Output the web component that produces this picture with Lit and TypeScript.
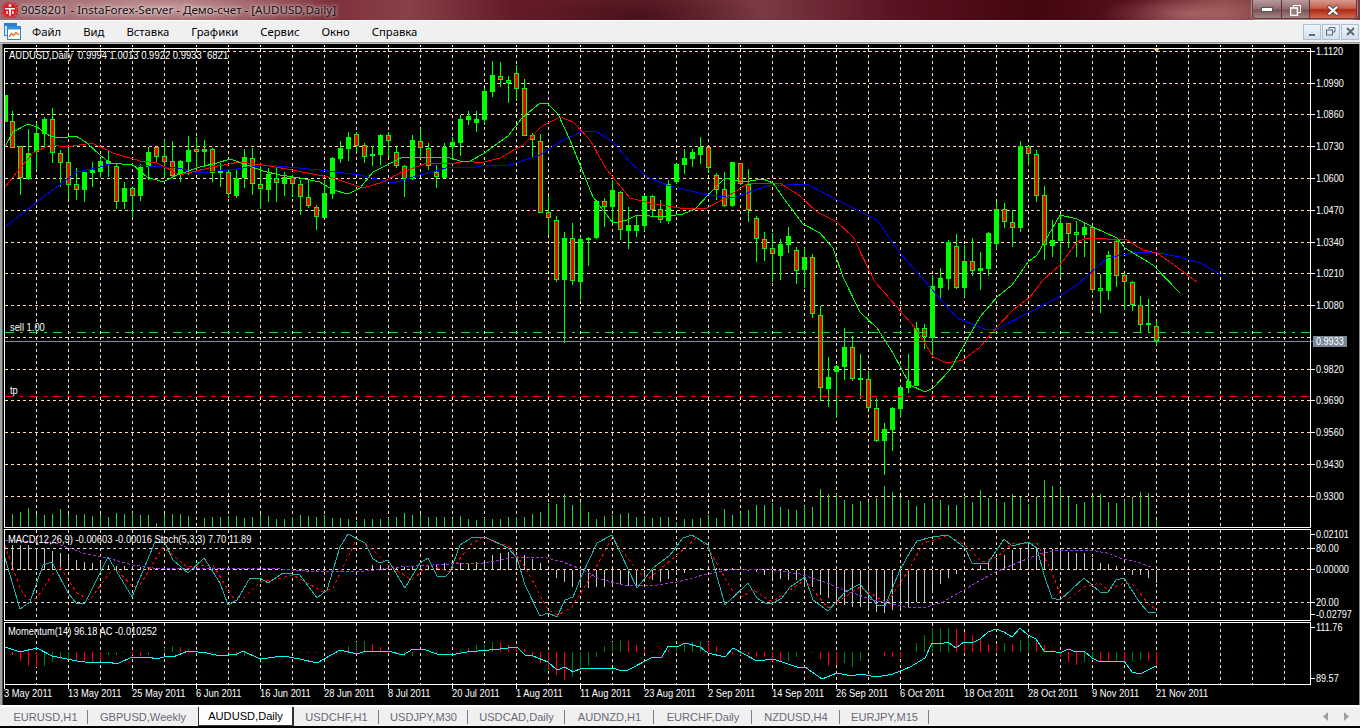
import { LitElement, html, css, svg } from "lit";
import { customElement } from "lit/decorators.js";
import { styleMap } from "lit/directives/style-map.js";

// [high, bodyTop, bodyBottom, low, bear(1)/bull(0)]
const C: number[][] = [
[95,95,122,122,0],[111,121,148,148,1],[146,146,178,195,1],[129,153,179,180,0],[123,133,152,170,0],[117,119,134,147,0],[108,119,153,163,1],[150,153,163,187,1],[148,162,185,199,1],[168,184,190,200,1],
[172,172,190,202,0],[162,170,173,187,0],[158,161,172,178,0],[150,161,164,177,0],[164,166,202,209,1],[182,188,202,209,0],[188,188,196,218,1],[164,167,196,201,0],[147,152,167,180,0],[147,147,157,163,1],
[140,156,162,177,1],[141,161,176,177,1],[160,161,175,182,0],[136,150,162,175,0],[137,149,152,167,1],[140,149,152,167,0],[148,149,173,182,1],[163,171,173,187,0],[170,172,194,198,1],[170,178,196,198,0],
[149,157,178,188,0],[148,158,184,195,1],[163,184,189,209,1],[168,174,190,202,0],[168,178,183,202,1],[172,177,184,196,0],[175,177,184,197,1],[180,184,197,215,1],[180,197,206,208,1],[205,207,217,230,1],
[180,193,218,218,0],[157,158,194,199,0],[141,148,159,163,0],[132,137,149,161,0],[132,134,146,152,1],[143,145,157,163,1],[146,154,156,166,0],[134,135,155,165,0],[132,135,141,157,1],[147,152,166,168,1],
[165,166,179,197,1],[135,140,179,180,0],[129,141,148,157,1],[143,148,166,170,1],[165,172,177,188,1],[143,147,178,178,0],[137,142,147,160,0],[115,119,143,156,0],[111,116,120,125,0],[111,119,123,132,0],
[88,91,120,125,0],[61,75,92,97,0],[62,76,80,87,1],[76,80,83,103,1],[65,73,89,101,1],[79,88,136,136,1],[133,135,140,158,1],[134,141,213,213,1],[196,212,218,235,1],[216,220,280,282,1],
[232,238,280,343,0],[223,238,281,285,1],[237,239,282,300,0],[237,238,240,266,0],[200,201,238,239,0],[198,201,207,227,1],[180,190,207,223,0],[191,192,230,240,1],[207,225,231,249,0],[215,225,231,237,0],
[195,196,226,231,0],[195,196,210,216,1],[200,209,220,223,1],[180,184,221,224,0],[164,164,182,184,0],[149,158,165,174,0],[149,152,159,167,0],[137,147,155,164,0],[147,147,168,173,1],[173,175,190,200,1],
[172,189,206,207,1],[162,162,206,207,0],[163,163,184,185,1],[169,184,210,222,1],[216,218,239,262,1],[232,239,249,261,1],[233,248,254,282,1],[239,244,256,280,0],[227,236,245,253,0],[247,250,271,284,1],
[248,257,270,288,0],[254,257,314,318,1],[306,315,388,401,1],[357,377,389,407,0],[365,366,372,418,0],[328,347,367,380,0],[336,347,379,381,1],[354,378,380,399,0],[371,379,408,409,1],[398,408,441,442,1],
[423,429,441,475,0],[407,408,430,451,0],[387,387,409,418,0],[354,381,388,393,0],[322,328,386,386,0],[324,328,337,349,1],[275,286,338,357,0],[268,278,288,300,0],[240,242,279,290,0],[234,246,288,289,1],
[245,261,288,297,0],[238,261,271,276,1],[252,268,271,290,0],[232,233,269,276,0],[202,209,244,249,0],[203,209,222,228,1],[210,222,228,247,1],[141,146,228,232,0],[146,146,154,166,1],[150,154,196,202,1],
[186,195,245,260,1],[220,240,246,257,0],[214,223,241,277,0],[223,223,234,248,1],[221,232,235,257,1],[223,227,235,257,0],[226,227,290,293,1],[274,288,291,313,1],[251,255,291,300,0],[240,241,276,287,1],
[273,275,282,310,1],[281,282,305,311,1],[296,305,325,332,1],[299,323,325,333,0],[321,326,341,345,1],
];

const MA_G = "5,147 13,132 28,124 37,127 50,136 60,138 76,136 87,143 100,155 110,163 133,165 147,177 163,182 177,175 200,167 217,163 230,159 247,165 263,171 280,175 300,178 320,182 333,190 348,194 360,188 373,172 387,165 403,157 420,158 447,157 460,161 470,161 483,154 508,136 522,118 540,103 548,104 558,114 570,140 582,170 593,197 613,223 627,220 637,215 663,217 683,214 695,209 710,193 725,178 743,182 763,179 773,183 787,203 803,224 820,233 833,248 843,277 860,312 877,328 893,353 910,385 925,392 933,388 950,370 963,347 980,317 997,297 1012,285 1028,262 1037,255 1060,215 1077,219 1093,227 1117,238 1125,248 1153,265 1180,293";
const MA_R = "5,187 17,172 33,153 50,145 67,147 92,143 113,153 140,161 157,163 180,175 213,167 240,162 263,165 287,169 333,178 363,188 383,182 400,173 427,163 450,164 467,161 480,163 500,158 523,145 542,126 560,117 573,122 590,140 607,170 630,198 650,203 680,208 707,208 727,197 747,184 780,183 800,196 817,212 837,222 853,237 875,282 897,307 917,330 933,357 947,363 963,360 980,347 997,327 1013,310 1030,297 1043,280 1060,265 1077,242 1087,238 1127,240 1143,250 1157,253 1177,267 1197,282";
const MA_B = "5,227 27,210 43,197 77,172 100,167 113,163 133,165 177,168 200,173 227,170 267,165 320,170 360,175 393,183 420,175 450,167 470,168 487,165 510,165 540,155 563,140 583,131 597,132 613,142 630,162 647,177 667,185 703,194 733,198 767,186 807,184 837,200 857,210 877,220 900,253 930,287 957,318 987,330 997,329 1030,312 1057,298 1077,285 1107,258 1133,253 1153,252 1180,257 1200,263 1222,275";

const SIG = "5,540 58,544 83,553 107,558 133,565 153,568 267,568 317,572 367,571 400,567 450,564 483,563 517,557 543,557 563,562 583,570 600,579 623,585 650,586 677,582 707,574 733,569 767,569 800,574 827,583 850,592 873,600 910,608 927,607 943,602 967,588 990,575 1007,567 1027,559 1043,553 1060,550 1090,550 1107,553 1123,559 1140,563 1153,568";
const STO = "5,558 20,609 30,602 43,565 52,562 68,593 77,604 85,603 108,557 132,597 155,542 165,543 173,560 188,573 204,558 220,583 228,605 237,600 250,578 260,578 268,583 283,573 300,575 317,598 327,590 340,547 348,534 365,543 373,559 380,563 388,560 405,588 420,563 428,558 437,576 445,577 450,572 460,545 473,537 485,537 508,548 517,558 525,585 540,616 548,613 557,617 565,600 573,597 582,575 597,543 612,535 637,588 653,568 670,555 683,538 692,535 708,545 725,605 748,583 757,598 765,603 773,603 782,598 790,587 805,577 813,600 828,611 845,592 860,584 877,605 885,606 900,570 910,552 917,541 932,537 948,535 965,548 972,563 988,563 1004,539 1012,546 1028,542 1037,548 1044,575 1052,598 1060,600 1084,578 1100,592 1108,592 1116,580 1124,578 1140,603 1148,612 1156,613";
const STS = "5,545 20,588 28,600 37,598 52,575 60,567 77,593 90,600 108,575 115,568 133,587 140,585 163,547 187,567 213,565 233,598 245,597 260,582 277,579 293,575 323,592 333,588 357,538 373,550 388,565 412,580 428,565 450,572 470,545 483,537 510,547 527,570 548,610 558,615 572,607 593,573 612,538 637,570 647,580 677,555 697,537 708,548 733,592 743,597 752,589 772,602 805,580 828,608 860,587 887,603 910,568 923,543 948,536 965,545 982,562 997,557 1012,544 1037,543 1052,572 1060,594 1070,598 1084,587 1100,583 1108,590 1124,583 1133,585 1148,603 1156,610";
const MOM = "5,647 20,652 37,648 52,656 77,661 93,663 108,662 117,664 132,657 148,657 157,659 167,656 173,657 188,651 207,653 220,656 237,654 243,651 260,659 283,656 300,659 317,663 340,650 357,654 363,652 388,651 403,655 413,649 423,649 437,654 450,655 467,652 500,649 517,647 525,655 533,656 548,662 557,670 565,667 573,672 582,668 597,668 605,669 613,668 622,671 628,670 653,657 662,657 668,646 677,647 685,643 700,647 708,653 725,657 733,648 757,661 773,659 797,667 805,667 822,679 837,673 852,676 860,674 877,677 893,674 910,667 925,658 932,643 940,644 948,642 956,648 964,642 972,643 980,639 988,632 996,629 1004,632 1012,637 1020,628 1028,635 1036,639 1044,651 1052,651 1060,653 1068,649 1076,652 1084,651 1092,658 1100,662 1108,661 1116,661 1124,661 1132,672 1140,674 1148,670 1156,666";

// MACD histogram tip, 3x offset from y=500 (baseline 208)
const HIST = [135,135,135,135,145,145,152,160,172,180,185,190,190,195,197,198,200,200,202,203,204,204,204,204,204,204,205,205,205,206,206,206,206,206,206,210,212,213,214,214,214,212,211,210,210,209,195,195,200,200,200,197,195,195,195,190,190,190,190,185,180,165,160,155,155,165,178,190,208,235,245,262,265,265,262,260,255,255,258,258,245,240,245,238,225,218,210,203,207,205,207,205,210,212,215,225,235,238,240,240,255,260,285,295,305,315,320,322,325,335,340,330,325,322,305,305,272,253,233,223,208,205,195,185,175,165,150,145,130,140,143,148,150,155,158,160,175,190,193,197,208,225,225,233,248];
// AC histogram tip, 3x offset from y=500 (baseline 455); negative = green
const AC = [0,465,483,497,500,-497,-485,-478,-480,480,483,485,483,-465,-465,-460,465,467,-465,0,-443,-437,440,447,0,0,460,460,460,467,-468,-460,-460,0,0,0,-460,-458,460,460,0,0,-450,-437,-427,-423,432,440,0,460,467,-468,0,0,462,0,0,-450,-443,-435,-430,-425,425,435,437,447,470,490,510,525,540,-530,-510,-497,-470,-437,-425,-420,423,435,447,452,0,450,-440,-430,-425,-423,427,437,0,465,465,465,472,472,482,482,-482,-470,0,-458,478,497,495,-490,-500,-482,-458,0,467,472,475,0,-430,-405,-385,-385,-385,387,397,405,418,432,435,-430,432,-420,-413,418,435,450,470,485,495,-487,-480,483,483,-483,483,-483,-480,483,498];
// volume tips as real y
const VOL = [50,42,37,25,43,44,43,28,43,45,42,48,43,50,40,43,38,45,45,70,43,42,42,47,80,53,52,50,48,47,54,50,43,47,57,58,52,46,47,50,46,53,55,58,62,57,57,56,55,50,40,46,43,50,50,50,57,48,57,60,53,57,57,52,50,52,42,37,10,12,-18,15,6,37,57,48,45,42,40,52,47,53,50,52,65,57,57,55,45,53,27,45,40,30,15,15,8].map((z) => 500 + z / 3)
  .concat([322,327,330,318,322,267,282,282,300,312,303,307,293,258,276,290,300,318,309,300,300,315,315,290,306,270,293,300,306,282,290,312,290,240,258,267,290,312,306,288,282,306,309,300,290,276,279,360].map((z) => 400 + z / 3));

const PRICE_Y: [number, string | null][] = [
  [51, "1.1120"], [83, "1.0990"], [114, "1.0860"], [146, "1.0730"], [178, "1.0600"], [210, "1.0470"], [242, "1.0340"], [273, "1.0210"],
  [305, "1.0080"], [337, null], [369, "0.9820"], [400, "0.9690"], [432, "0.9560"], [464, "0.9430"], [496, "0.9300"],
];
const DATES = ["3 May 2011","13 May 2011","25 May 2011","6 Jun 2011","16 Jun 2011","28 Jun 2011","8 Jul 2011","20 Jul 2011","1 Aug 2011","11 Aug 2011","23 Aug 2011","2 Sep 2011","14 Sep 2011","26 Sep 2011","6 Oct 2011","18 Oct 2011","28 Oct 2011","9 Nov 2011","21 Nov 2011"];
const TABS: [string, number][] = [["EURUSD,H1",85],["GBPUSD,Weekly",110],["AUDUSD,Daily",96],["USDCHF,H1",85],["USDJPY,M30",89],["USDCAD,Daily",97],["AUDNZD,H1",89],["EURCHF,Daily",98],["NZDUSD,H4",88],["EURJPY,M15",89]];
const MENU = ["Файл","Вид","Вставка","Графики","Сервис","Окно","Справка"];

const GX = Array.from({ length: 40 }, (_, k) => 4 + 32 * (k + 1));

@customElement("app-root")
export class AppRoot extends LitElement {
  static styles = css`
    :host { display: block; width: 1360px; height: 728px; overflow: hidden; background: #000; font-family: "Noto Sans", "Liberation Sans", sans-serif; }
    .app { display: flex; flex-direction: column; width: 1360px; height: 728px; }
    .title {
      height: 20px; flex: none; display: flex; align-items: flex-start; padding-left: 2px; gap: 3px;
      background:
        radial-gradient(ellipse 170px 24px at 170px 8px, rgba(235,205,205,.6), rgba(235,205,205,0) 100%),
        radial-gradient(ellipse 90px 20px at 1190px 14px, rgba(200,130,130,.6), rgba(200,130,130,0) 100%),
        radial-gradient(ellipse 120px 30px at 640px 16px, rgba(40,0,5,.5), rgba(40,0,5,0) 100%),
        linear-gradient(90deg, #a06a70 0, #7e3039 24%, #8a4048 30%, #641a26 38%, #6a2430 48%, #7a3a44 56%, #5a1220 66%, #43060f 76%, #56121e 84%, #8a4448 90%, #7a3a40 100%);
    }
    .title svg { margin-top: 2px; flex: none; }
    .title-text { font-size: 11.6px; line-height: 20px; color: #111; white-space: pre; text-shadow: 0 0 5px rgba(255,255,255,.85), 0 0 3px rgba(255,255,255,.6); }
    .spacer { flex: 1; }
    .win { display: flex; height: 18px; margin-right: 3px; border: 1px solid #5c3a3e; border-top: none; border-radius: 0 0 4px 4px; overflow: hidden; box-shadow: 0 0 0 1px rgba(255,255,255,.35); }
    .win div { display: flex; align-items: center; justify-content: center; background: linear-gradient(#b89a9c, #8f6a6e 50%, #7b5054 55%, #a48486); }
    .win .wmin { width: 28px; border-right: 1px solid #54363a; }
    .win .wres { width: 27px; border-right: 1px solid #54363a; }
    .win .wcls { width: 46px; background: linear-gradient(#d89a90, #c4604e 45%, #b02810 55%, #d06a50); }
    .sep { height: 1px; background: #fff; flex: none; }
    .menu { height: 21px; flex: none; background: #f0f0f0; display: flex; align-items: center; position: relative; font-size: 11.3px; color: #000; }
    .menu .doc { margin: 0 11px 0 4px; flex: none; }
    .menu .item { margin-right: 22px; }
    .mdi { margin-left: auto; display: flex; gap: 1px; margin-right: 1px; }
    .mdi div { width: 18px; height: 16px; border: 1px solid #a8c0d8; box-sizing: border-box; background: linear-gradient(#eef3f8, #d4e0ec); display: flex; align-items: center; justify-content: center; }
    .edge { height: 2px; flex: none; background: linear-gradient(#8c8c8c, #c8c8c8); }
    .chart { display: block; flex: none; width: 1360px; height: 661px; background: #000; }
    .chart text { font-family: "Liberation Sans", sans-serif; font-size: 10.8px; fill: #fff; white-space: pre; transform-box: fill-box; transform-origin: left center; transform: scaleX(.866); }
    .chart text.axis { transform: scaleX(.843); }
    .chart text.hdr { transform: scaleX(.878); }
    .chart line, .chart polyline, .chart rect { shape-rendering: crispEdges; }
    .tabs { flex: none; display: flex; background: #f0f0f0; border-top: 2px solid #fff; height: 19px; padding-left: 3px; font-size: 11.1px; font-family: "Liberation Sans", sans-serif; color: #6c6878; align-items: stretch; position: relative; }
    .tab { box-sizing: border-box; display: flex; align-items: center; justify-content: center; position: relative; white-space: nowrap; }
    .tab::after { content: ""; position: absolute; right: 0; top: 3px; height: 14px; width: 1px; background: #807c88; }
    .tab.active { background: #fff; color: #000; border-left: 1px solid #333; border-right: 2px solid #333; border-bottom: 1px solid #333; }
    .tab.active::after, .tab.nosep::after { display: none; }
    .arrows { position: absolute; right: 11px; top: 5px; display: flex; gap: 16px; }
  `;

  private chart() {
    const cx = (i: number) => 4 + 8 * i;
    const grid = "#ffdead";
    const hline = (y: number, x2 = 1310, c = grid) => svg`<line x1="5" x2=${x2} y1=${y + 0.5} y2=${y + 0.5} stroke=${c} stroke-dasharray="3 3" />`;
    const vline = (x: number, y1: number, y2: number) => svg`<line x1=${x + 0.5} x2=${x + 0.5} y1=${y1} y2=${y2} stroke=${grid} stroke-dasharray="3 3" />`;
    const pane = (y1: number, y2: number) => svg`<rect x="4.5" y=${y1 + 0.5} width="1306" height=${y2 - y1} fill="none" stroke="#fff" />`;
    const tick = (y: number, t: string) => svg`<line x1="1311" x2="1315" y1=${y + 0.5} y2=${y + 0.5} stroke="#fff" /><text class="axis" x="1316" y=${y + 4}>${t}</text>`;

    return svg`
      <svg class="chart" viewBox="0 44 1360 661" width="1360" height="661" xmlns="http://www.w3.org/2000/svg">
        <rect x="0" y="44" width="2" height="661" fill="#a0a0a0" />
        <rect x="2" y="44" width="1" height="661" fill="#555" />
        <rect x="1359" y="44" width="1" height="661" fill="#8a8a8a" />

        ${GX.map((x) => svg`<line x1=${x + 0.5} x2=${x + 0.5} y1="45" y2="47" stroke="#ffffff" />`)}
        ${GX.map((x) => vline(x, 49, 527))}
        ${GX.map((x) => vline(x, 530, 620))}
        ${GX.map((x) => vline(x, 623, 684))}
        ${PRICE_Y.map(([y]) => hline(y))}
        ${hline(548, 1310, "#d8d8d8")}
        ${hline(569)}
        ${hline(602, 1310, "#d8d8d8")}

        ${VOL.map((t, i) => t < 527 ? svg`<line x1=${cx(i) + 0.5} x2=${cx(i) + 0.5} y1=${t} y2="527" stroke="#32cd32" />` : null)}

        ${C.map((c, i) => {
          const x = cx(i);
          return svg`<line x1=${x + 0.5} x2=${x + 0.5} y1=${c[0]} y2=${c[3]} stroke="#00ff00" />
            ${c[4]
              ? svg`<rect x=${x - 2} y=${c[1]} width="5" height=${c[2] - c[1]} fill="#00ff00" /><rect x=${x - 1} y=${c[1] + 1} width="3" height=${Math.max(c[2] - c[1] - 2, 1)} fill="#ff0000" />`
              : svg`<rect x=${Math.max(x - 2, 5)} y=${c[1]} width=${i === 0 ? 3 : 5} height=${c[2] - c[1]} fill="#00ff00" />`}`;
        })}

        <polyline points=${MA_B} fill="none" stroke="#0000ff" />
        <polyline points=${MA_R} fill="none" stroke="#ff0000" />
        <polyline points=${MA_G} fill="none" stroke="#00ff00" />

        <line x1="5" x2="1310" y1="332.5" y2="332.5" stroke="#32cd32" stroke-dasharray="9 6 3 6" />
        <line x1="5" x2="1310" y1="396.5" y2="396.5" stroke="#ff0000" stroke-dasharray="9 6 3 6" />
        <line x1="5" x2="1310" y1="341.5" y2="341.5" stroke="#778899" />

        ${HIST.map((z, i) => svg`<line x1=${cx(i) + 0.5} x2=${cx(i) + 0.5} y1=${500 + z / 3} y2="569.5" stroke="#c8c8c8" />`)}
        <polyline points=${SIG} fill="none" stroke="#a335e0" stroke-dasharray="3 2" />
        <polyline points=${STS} fill="none" stroke="#ff0000" stroke-dasharray="3 3" />
        <polyline points=${STO} fill="none" stroke="#20b2aa" />

        ${AC.map((z, i) => {
          if (!z) return null;
          const y = 500 + Math.abs(z) / 3;
          return svg`<line x1=${cx(i) + 0.5} x2=${cx(i) + 0.5} y1=${y} y2="652" stroke=${z < 0 ? "#008000" : "#ff0000"} />`;
        })}
        <polyline points=${MOM} fill="none" stroke="#00ffff" />

        ${pane(48, 527)}
        ${pane(529, 620)}
        ${pane(622, 684)}
        <polygon points="1153,48 1160,48 1156.5,52" fill="#ffdead" />

        <text class="hdr" x="9" y="59">AUDUSD,Daily  0.9994 1.0013 0.9922 0.9933  6821</text>
        <text x="10" y="331">sell 1.00</text>
        <text x="10" y="394">tp</text>
        <text x="8" y="543">MACD(12,26,9) -0.00603 -0.00016 Stoch(5,3,3) 7.70 11.89</text>
        <text x="8" y="635">Momentum(14) 96.18 AC -0.010252</text>

        ${PRICE_Y.map(([y, t]) => t ? tick(y, t) : null)}
        <rect x="1313" y="336" width="34" height="11" fill="#778899" />
        <line x1="1311" x2="1313" y1="341.5" y2="341.5" stroke="#778899" />
        <text class="axis" x="1316" y="345.5">0.9933</text>
        ${tick(534, "0.02101")}
        ${tick(548, "80.00")}
        ${tick(569, "0.00000")}
        ${tick(602, "20.00")}
        ${tick(614, "-0.02797")}
        ${tick(627, "111.76")}
        ${tick(678, "89.57")}

        ${DATES.map((d, k) => svg`
          <line x1=${4.5 + 64 * k} x2=${4.5 + 64 * k} y1="685" y2="689" stroke="#fff" />
          <text x=${4 + 64 * k} y="697">${d}</text>`)}
      </svg>`;
  }

  render() {
    return html`
      <div class="app">
        <div class="title">
          <svg width="16" height="16" viewBox="0 0 16 16">
            <circle cx="8" cy="8" r="7.9" fill="none" stroke="#e8141c" stroke-width="1.6" stroke-dasharray="2 1.4" />
            <circle cx="8" cy="8" r="6.6" fill="#e8141c" />
            <circle cx="8" cy="3.7" r="1.4" fill="#fff" />
            <path d="M3 6 L13 6 L13 7.6 L9 7.6 L9 13.4 L7 13.4 L7 7.6 L3 7.6 Z" fill="#fff" />
            <path d="M4.4 9 L5.8 9 L5.8 12 L4.4 12 Z M10.2 9 L11.6 9 L11.6 12 L10.2 12 Z" fill="#fff" />
          </svg>
          <span class="title-text">9058201 - InstaForex-Server - Демо-счет - [AUDUSD,Daily]</span>
          <span class="spacer"></span>
          <div class="win">
            <div class="wmin"><svg width="12" height="6" viewBox="0 0 12 6"><rect x="0.5" y="0.5" width="11" height="4" fill="#fff" stroke="#555" /></svg></div>
            <div class="wres"><svg width="11" height="11" viewBox="0 0 11 11"><rect x="3.5" y="0.5" width="7" height="7" fill="none" stroke="#fff" /><rect x="0.5" y="3" width="7" height="7.5" fill="#9a7a7c" stroke="#fff" stroke-width="1.6" /></svg></div>
            <div class="wcls"><svg width="12" height="11" viewBox="0 0 12 11"><path d="M1 1 L11 10 M11 1 L1 10" stroke="#444" stroke-width="3.6" /><path d="M1.5 1.5 L10.5 9.5 M10.5 1.5 L1.5 9.5" stroke="#fff" stroke-width="2.2" /></svg></div>
          </div>
        </div>
        <div class="sep"></div>
        <div class="menu">
          <svg class="doc" width="17" height="17" viewBox="0 0 17 17">
            <rect x="0.5" y="0.5" width="12" height="12" fill="#d8ecfa" stroke="#2a80d0" />
            <rect x="0.5" y="0.5" width="12" height="2.5" fill="#2a80d0" />
            <rect x="3.5" y="3.5" width="13" height="13" fill="#fff" stroke="#2a80d0" />
            <rect x="3.5" y="3.5" width="13" height="3" fill="#3a90e0" />
            <path d="M5 14 L7.5 10.5 L9.5 12.5 L12 9.5 L15 12" fill="none" stroke="#f07020" stroke-width="1.4" />
          </svg>
          ${MENU.map((m) => html`<span class="item">${m}</span>`)}
          <div class="mdi">
            <div><svg width="8" height="8" viewBox="0 0 8 8"><rect x="1" y="6" width="6" height="2" fill="#5a6a7a" /></svg></div>
            <div><svg width="10" height="9" viewBox="0 0 10 9"><path d="M3 2.5V0.5H9V5H7" fill="none" stroke="#5a6a7a" /><rect x="0.5" y="3" width="6" height="5" fill="none" stroke="#5a6a7a" /></svg></div>
            <div><svg width="9" height="9" viewBox="0 0 9 9"><path d="M1 1 L8 8 M8 1 L1 8" stroke="#5a6a7a" stroke-width="2" /></svg></div>
          </div>
        </div>
        <div class="edge"></div>
        ${this.chart()}
        <div class="tabs">
          ${TABS.map(([t, w], i) => html`<div class="tab ${i === 2 ? "active" : ""} ${i === 1 ? "nosep" : ""}" style=${styleMap({ width: w + "px" })}>${t}</div>`)}
          <div class="arrows">
            <svg width="5" height="9" viewBox="0 0 5 9"><path d="M5 0 L0 4.5 L5 9 Z" fill="#a0a0a8" /></svg>
            <svg width="5" height="9" viewBox="0 0 5 9"><path d="M0 0 L5 4.5 L0 9 Z" fill="#a0a0a8" /></svg>
          </div>
        </div>
      </div>
    `;
  }
}
